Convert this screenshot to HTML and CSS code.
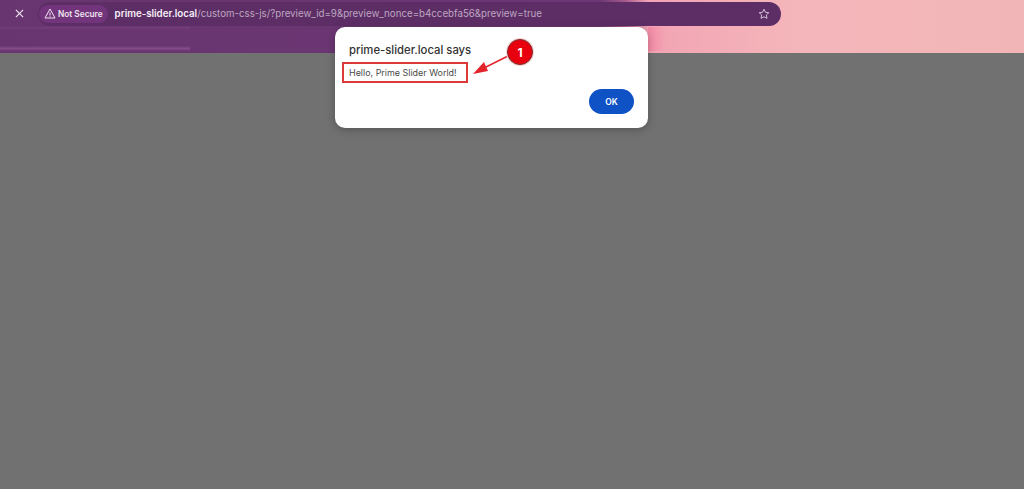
FILE: index.html
```html
<!DOCTYPE html>
<html lang="en">
<head>
<meta charset="utf-8">
<title>Prime Slider preview</title>
<link rel="stylesheet" href="styles.css">
</head>
<body>
<header class="chrome">
  <div class="toolbar">
    <svg class="close" viewBox="0 0 10 10" width="9" height="9"><path d="M1 1l8 8M9 1l-8 8"/></svg>
    <div class="omnibox">
      <div class="chip">
        <svg class="warn" viewBox="0 0 12 11" width="12" height="11"><path d="M6 1L11 10H1Z"/><path d="M6 4.500V7.500M6 8.300V9"/></svg>
        <span>Not Secure</span>
      </div>
      <div class="url"><b>prime-slider.local</b>/custom-css-js/?preview_id=9&amp;preview_nonce=b4ccebfa56&amp;preview=true</div>
      <svg class="star" viewBox="0 0 14 14" width="12" height="12"><path d="M7 1.400l1.700 3.600 3.900.5-2.900 2.700.8 3.900L7 10.200l-3.500 1.900.8-3.900L1.400 5.500l3.900-.5z"/></svg>
    </div>
  </div>
</header>
<main class="page"></main>
<div class="dialog">
  <h1 class="title">prime-slider.local says</h1>
  <p class="message">Hello, Prime Slider World!</p>
  <div class="actions"><button class="ok">OK</button></div>
</div>
<svg class="arrow" viewBox="0 0 70 50" width="70" height="50">
  <path class="shaft" d="M38 18L12 31"/>
  <path class="head" d="M3 36L14 24L18 33Z"/>
</svg>
<div class="badge">1</div>
</body>
</html>
```
FILE: styles.css
```css
* { box-sizing: border-box; }
html, body { margin: 0; height: 100%; }
body {
  position: relative;
  overflow: hidden;
  background: #717171;
  font-family: "Inter", "Liberation Sans", sans-serif;
  display: flex;
  flex-direction: column;
}
.chrome {
  height: 53px;
  flex: none;
  background:
    linear-gradient(180deg, rgba(170,110,170,0), rgba(170,110,170,.4) 50%, rgba(170,110,170,0)) 0 46px / 190px 5px no-repeat,
    linear-gradient(180deg, rgba(150,95,155,0), rgba(150,95,155,.2) 50%, rgba(150,95,155,0)) 0 26px / 190px 4px no-repeat,
    linear-gradient(90deg, #f48aa6, rgba(244,180,186,0)) 648px 27px / 18px 24px no-repeat,
    linear-gradient(90deg, #693570 0, #6c3775 600px, #a45a8c 625px, #f2a4b4 648px, #f4b6ba 800px, #f2b5b7 1024px);
}
.toolbar {
  display: flex;
  align-items: center;
  height: 26px;
  padding: 1px 0 0 15px;
  width: 781px;
}
.close { flex: none; margin-right: 14px; }
.close path { stroke: #eee3ee; stroke-width: 1.3; fill: none; }
.omnibox {
  flex: 1;
  height: 24px;
  border-radius: 12px;
  background: #5d2e66;
  display: flex;
  align-items: center;
  padding-left: 1px;
  padding-right: 11px;
}
.chip {
  display: flex;
  align-items: center;
  gap: 2px;
  height: 18px;
  padding: 0 5px;
  border-radius: 9px;
  background: #72357b;
  color: #efe4ef;
  font-size: 8.300px;
  font-weight: 600;
}
.warn path { fill: none; stroke: #efe4ef; stroke-width: 1; }
.url {
  flex: 1;
  margin-left: 7px;
  font-size: 9.730px;
  color: #bda6c0;
  white-space: nowrap;
}
.url b { color: #f6eef6; font-weight: 600; }
.star path { fill: none; stroke: #d9c6da; stroke-width: 1.1; }
.page { flex: 1; background: #717171; }
.dialog {
  position: absolute;
  left: 335px;
  top: 27px;
  width: 313px;
  height: 101px;
  background: #fff;
  border-radius: 10px;
  box-shadow: 0 2px 8px rgba(0,0,0,.25);
  padding: 16px 14px 14px;
  display: flex;
  flex-direction: column;
}
.title {
  margin: 0;
  font-size: 11.300px;
  line-height: 14px;
  font-weight: 500;
  color: #333;
}
.message {
  margin: 5px 0 0 -7px;
  width: 126px;
  height: 21px;
  border: 2px solid #dc3a38;
  padding-left: 5px;
  font-size: 8.950px;
  line-height: 17px;
  color: #4a4a4a;
}
.actions { margin-top: auto; display: flex; justify-content: flex-end; }
.ok {
  width: 45px;
  height: 25px;
  border: 0;
  border-radius: 13px;
  background: #0f52c6;
  color: #fff;
  font: 600 8.500px "Inter", "Liberation Sans", sans-serif;
}
.arrow { position: absolute; left: 470px; top: 38px; }
.shaft { stroke: #e3242b; stroke-width: 1.500; fill: none; }
.head { fill: #e3242b; }
.badge {
  position: absolute;
  left: 507px;
  top: 39px;
  width: 26px;
  height: 26px;
  border-radius: 50%;
  background: #e8000f;
  border: 1.500px solid #7c2b2b;
  box-shadow: 0 0 0 1px #f5d5d5;
  color: #fff;
  font-size: 12px;
  font-weight: 700;
  display: flex;
  align-items: center;
  justify-content: center;
}
```
